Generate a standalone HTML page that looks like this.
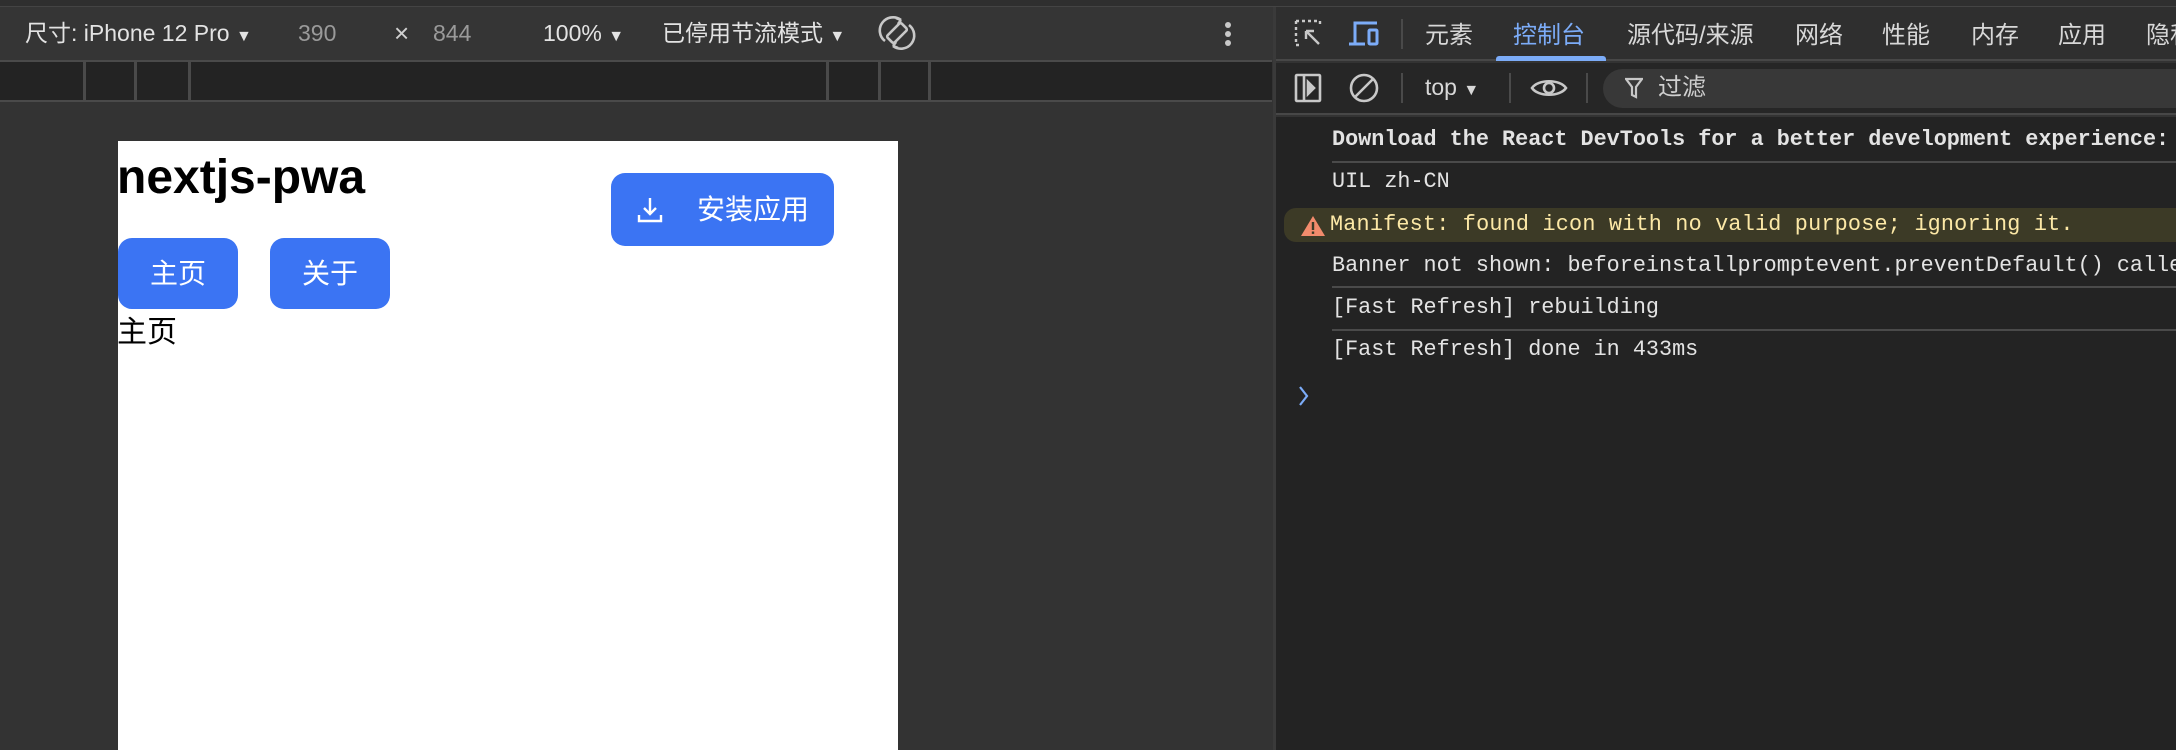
<!DOCTYPE html>
<html><head><meta charset="utf-8"><style>
*{margin:0;padding:0;box-sizing:border-box}
body{width:2176px;height:750px;overflow:hidden;background:#333;font-family:"Liberation Sans","Noto Sans CJK SC",sans-serif;position:relative}
.a{position:absolute;white-space:nowrap;line-height:1}
.mono{font-family:"Liberation Mono","DejaVu Sans Mono",monospace;font-size:21.8px;color:#e3e3e3;line-height:28px}
.btn{position:absolute;background:#3b74f3;border-radius:14px;color:#fff;font-size:28px;line-height:1;display:flex;align-items:center;justify-content:center}
#dt{position:absolute;left:1276px;top:0;width:900px;height:750px;overflow:hidden}
</style></head><body>
<div class="a" style="left:0;top:0;width:2176px;height:7px;background:#2f2f2f;border-bottom:1px solid #444"></div>
<div class="a" style="left:0;top:7px;width:1274px;height:54px;background:#353535"></div>
<div class="a" style="left:25px;top:22px;font-size:23px;color:#e3e3e3">尺寸: iPhone 12 Pro <span style="font-size:16px">▼</span></div>
<div class="a" style="left:298px;top:22px;font-size:23px;color:#9a9a9a">390</div>
<div class="a" style="left:394px;top:20px;font-size:26px;color:#d0d0d0">×</div>
<div class="a" style="left:433px;top:22px;font-size:23px;color:#9a9a9a">844</div>
<div class="a" style="left:543px;top:22px;font-size:23px;color:#e3e3e3">100% <span style="font-size:16px">▼</span></div>
<div class="a" style="left:662px;top:22px;font-size:23px;color:#e3e3e3">已停用节流模式 <span style="font-size:16px">▼</span></div>
<svg class="a" style="left:877px;top:13px" width="40" height="40" viewBox="0 0 40 40" fill="none" stroke="#c8c8c8" stroke-width="2.6"><rect x="15" y="10" width="10" height="20" rx="2" transform="rotate(45 20 20)"/><path d="M8 28A13 13 0 0 1 24 7"/><path d="M24 7l-5 -2M24 7l-3 4"/><path d="M32 12A13 13 0 0 1 16 33"/><path d="M16 33l5 2M16 33l3 -4"/></svg>
<div class="a" style="left:1225px;top:22px;width:6px"><div style="width:6px;height:6px;border-radius:3px;background:#c8c8c8;margin-bottom:3px"></div><div style="width:6px;height:6px;border-radius:3px;background:#c8c8c8;margin-bottom:3px"></div><div style="width:6px;height:6px;border-radius:3px;background:#c8c8c8"></div></div>
<div class="a" style="left:0;top:60px;width:1272px;height:42px;background:#232323;border-top:2px solid #4a4a4a;border-bottom:2px solid #4a4a4a"></div>
<div class="a" style="left:83px;top:61px;width:3px;height:39px;background:#4a4a4a"></div>
<div class="a" style="left:134px;top:61px;width:3px;height:39px;background:#4a4a4a"></div>
<div class="a" style="left:188px;top:61px;width:3px;height:39px;background:#4a4a4a"></div>
<div class="a" style="left:826px;top:61px;width:3px;height:39px;background:#4a4a4a"></div>
<div class="a" style="left:878px;top:61px;width:3px;height:39px;background:#4a4a4a"></div>
<div class="a" style="left:928px;top:61px;width:3px;height:39px;background:#4a4a4a"></div>
<div class="a" style="left:118px;top:141px;width:780px;height:609px;background:#fff"></div>
<div class="a" style="left:117px;top:154px;font-size:48px;font-weight:bold;color:#000">nextjs-pwa</div>
<div class="btn" style="left:611px;top:173px;width:223px;height:73px;justify-content:flex-start">
<svg style="margin-left:24px" width="30" height="30" viewBox="0 0 30 30" fill="none" stroke="#fff" stroke-width="2.4"><path d="M15 3v16M9 13l6 6 6-6M4 20v6h22v-6"/></svg>
<span style="margin-left:32px">安装应用</span></div>
<div class="btn" style="left:118px;top:238px;width:120px;height:71px">主页</div>
<div class="btn" style="left:270px;top:238px;width:120px;height:71px">关于</div>
<div class="a" style="left:117px;top:318px;font-size:30px;color:#000">主页</div>
<div class="a" style="left:1273px;top:7px;width:3px;height:743px;background:#3a3a3a"></div>
<div id="dt">
<div class="a" style="left:0;top:7px;width:900px;height:54px;background:#2f2f2f;border-bottom:2px solid #474747"></div>
<svg class="a" style="left:18px;top:19px" width="28" height="30" viewBox="0 0 28 30" fill="none" stroke="#c8c8c8" stroke-width="2.4"><path d="M2 2h24M2 2v24M2 26h6M26 2v6" stroke-dasharray="3 3"/><path d="M12 12l13 13M12 12h8M12 12v8"/></svg>
<svg class="a" style="left:71px;top:20px" width="34" height="28" viewBox="0 0 34 28" fill="none" stroke="#7cacf8" stroke-width="3"><path d="M8 24V3h22M2 24h16"/><rect x="22" y="10" width="8" height="14" rx="1"/></svg>
<div class="a" style="left:125px;top:19px;width:2px;height:30px;background:#4a4a4a"></div>
<div class="a" style="left:149px;top:24px;font-size:24px;color:#d8d8d8">元素</div>
<div class="a" style="left:237px;top:24px;font-size:24px;color:#7cacf8">控制台</div>
<div class="a" style="left:220px;top:56px;width:110px;height:5px;background:#7cacf8;border-radius:3px 3px 0 0"></div>
<div class="a" style="left:351px;top:24px;font-size:24px;color:#d8d8d8">源代码/来源</div>
<div class="a" style="left:519px;top:24px;font-size:24px;color:#d8d8d8">网络</div>
<div class="a" style="left:606px;top:24px;font-size:24px;color:#d8d8d8">性能</div>
<div class="a" style="left:695px;top:24px;font-size:24px;color:#d8d8d8">内存</div>
<div class="a" style="left:782px;top:24px;font-size:24px;color:#d8d8d8">应用</div>
<div class="a" style="left:870px;top:24px;font-size:24px;color:#d8d8d8">隐私</div>
<div class="a" style="left:0;top:63px;width:900px;height:52px;background:#262626;border-bottom:2px solid #474747"></div>
<svg class="a" style="left:18px;top:73px" width="28" height="30" viewBox="0 0 28 30" fill="none" stroke="#c8c8c8" stroke-width="2.6"><rect x="2" y="2" width="24" height="26" rx="1"/><path d="M10 2v26"/><path d="M14 9l6 6-6 6z" fill="#c8c8c8"/></svg>
<svg class="a" style="left:72px;top:72px" width="32" height="32" viewBox="0 0 32 32" fill="none" stroke="#c8c8c8" stroke-width="2.6"><circle cx="16" cy="16" r="13"/><path d="M7 25L25 7"/></svg>
<div class="a" style="left:125px;top:73px;width:2px;height:30px;background:#4a4a4a"></div>
<div class="a" style="left:149px;top:76px;font-size:23px;color:#d8d8d8">top <span style="font-size:16px">▼</span></div>
<div class="a" style="left:233px;top:73px;width:2px;height:30px;background:#4a4a4a"></div>
<svg class="a" style="left:254px;top:76px" width="38" height="24" viewBox="0 0 38 24" fill="none" stroke="#c8c8c8" stroke-width="2.6"><path d="M2 12C8 3 30 3 36 12C30 21 8 21 2 12Z"/><circle cx="19" cy="12" r="5"/></svg>
<div class="a" style="left:310px;top:73px;width:2px;height:30px;background:#4a4a4a"></div>
<div class="a" style="left:327px;top:69px;width:600px;height:39px;background:#383838;border-radius:20px"></div>
<svg class="a" style="left:349px;top:77px" width="18" height="22" viewBox="0 0 18 22" fill="none" stroke="#c8c8c8" stroke-width="2.2"><path d="M1 2h16L11 10v10l-4-2V10z"/></svg>
<div class="a" style="left:382px;top:76px;font-size:24px;color:#d0d0d0">过滤</div>
<div class="a" style="left:0;top:117px;width:900px;height:633px;background:#232323"></div>
<div class="a mono" style="left:56px;top:126px;font-weight:bold">Download the React DevTools for a better development experience: https://reactjs.org/link/react-devtools</div>
<div class="a" style="left:56px;top:161px;width:844px;height:2px;background:#4a4a4a"></div>
<div class="a mono" style="left:56px;top:168px">UIL zh-CN</div>
<div class="a" style="left:8px;top:208px;width:900px;height:34px;background:#3c3a26;border-radius:12px 0 0 12px"></div>
<svg class="a" style="left:24px;top:215px" width="26" height="22" viewBox="0 0 26 22"><path d="M13 1L25 21H1Z" fill="#f28b6c"/><rect x="11.8" y="7" width="2.4" height="8" fill="#3c3a26"/><rect x="11.8" y="16.5" width="2.4" height="2.4" fill="#3c3a26"/></svg>
<div class="a mono" style="left:54px;top:211px;color:#fce8a6;letter-spacing:0.2px">Manifest: found icon with no valid purpose; ignoring it.</div>
<div class="a mono" style="left:56px;top:252px">Banner not shown: beforeinstallpromptevent.preventDefault() called.</div>
<div class="a" style="left:56px;top:286px;width:844px;height:2px;background:#4a4a4a"></div>
<div class="a mono" style="left:56px;top:294px">[Fast Refresh] rebuilding</div>
<div class="a" style="left:56px;top:329px;width:844px;height:2px;background:#4a4a4a"></div>
<div class="a mono" style="left:56px;top:336px">[Fast Refresh] done in 433ms</div>
<svg class="a" style="left:22px;top:385px" width="12" height="22" viewBox="0 0 12 22" fill="none" stroke="#7cacf8" stroke-width="2.2"><path d="M2 2l7 9-7 9"/></svg>
</div>
</body></html>
